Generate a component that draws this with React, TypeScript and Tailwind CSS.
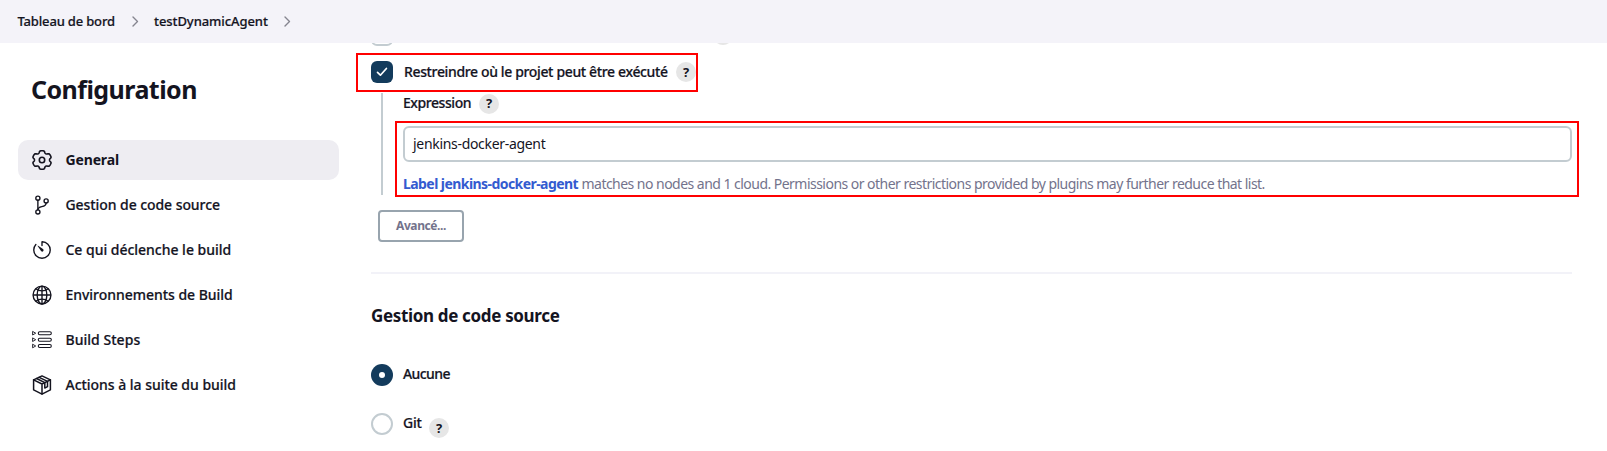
import type { ReactNode } from "react";
import { IoGitBranchOutline, IoTimerOutline, IoGlobeOutline } from "react-icons/io5";

// Outline of a gear with six broad, rounded teeth.
const gearPoints = Array.from({ length: 120 }, (_, i) => {
  const angle = (i * Math.PI) / 60;
  const tooth = Math.tanh(2.2 * (Math.cos(6 * (angle - Math.PI / 2)) + 0.35));
  const radius = 8.2 + 1.05 * tooth;
  return `${(10 + 1.04 * radius * Math.cos(angle)).toFixed(2)},${(10 + radius * Math.sin(angle)).toFixed(2)}`;
}).join(" ");

function GearIcon() {
  return (
    <svg width="20" height="20" viewBox="0 0 20 20" fill="none" stroke="currentColor" strokeWidth="1.6" strokeLinejoin="round">
      <polygon points={gearPoints} />
      <circle cx="10" cy="10" r="2.7" />
    </svg>
  );
}

function StepsIcon() {
  return (
    <svg width="20" height="20" viewBox="0 0 20 20" fill="none" stroke="currentColor" strokeWidth="1.1" strokeLinejoin="round">
      {[3.2, 9.7, 16].map((y) => (
        <g key={y}>
          <path strokeWidth="0.9" d={`M0.6 ${y - 1.8} L3.7 ${y} L0.6 ${y + 1.8} Z`} />
          <rect x="6.3" y={y - 1.5} width="13" height="3" rx="1.4" />
        </g>
      ))}
    </svg>
  );
}

function PackageIcon() {
  return (
    <svg width="20" height="20" viewBox="0 0 20 20" fill="none" stroke="currentColor" strokeWidth="1.5" strokeLinejoin="round" strokeLinecap="round">
      <path d="M10 0.9 L18.4 4.9 V14.8 L10 19.1 L1.6 14.8 V4.9 Z" />
      <path d="M1.6 4.9 L10 9 L18.4 4.9 M10 9 V19.1" />
      <path d="M4.6 3.5 L12.8 7.6 V13.1 L15.5 11.7 V6.4 L7.2 2.3" />
    </svg>
  );
}

function Chevron() {
  return (
    <svg width="7" height="11" viewBox="0 0 7 11" fill="none" stroke="#85858f" strokeWidth="1.4" strokeLinecap="round" strokeLinejoin="round">
      <path d="M1 1 L5.5 5.5 L1 10" />
    </svg>
  );
}

function Help() {
  return (
    <span className="flex size-5 shrink-0 items-center justify-center rounded-full bg-[#e6e6e6] text-[13px] font-bold leading-none">?</span>
  );
}

function NavItem({ icon, label, className }: { icon: ReactNode; label: string; className: string }) {
  return (
    <a className={`flex h-10 items-center gap-[13.5px] rounded-[10px] pl-3.5 text-[14px] leading-5 ${className}`}>
      <span className="flex size-5 shrink-0 items-center justify-center">{icon}</span>
      <span className="whitespace-nowrap">{label}</span>
    </a>
  );
}

export default function App() {
  return (
    <div className="relative h-[451px] w-full overflow-hidden bg-white font-['Noto_Sans',sans-serif] text-[#14141f]">
      <header className="flex h-[43px] items-center bg-[#f4f3f9] pl-[17.5px] text-[13px] font-medium [-webkit-text-stroke:0.2px]">
        <span className="w-[114.5px] whitespace-nowrap tracking-[-0.17px]">Tableau de bord</span>
        <Chevron />
        <span className="ml-[15px] w-[130px] whitespace-nowrap tracking-[-0.08px]">testDynamicAgent</span>
        <Chevron />
      </header>

      <div className="flex h-[408px]">
        <aside className="w-[339px] shrink-0 pl-[18px] pt-[29px]">
          <h1 className="mb-[34px] h-[34px] pl-[13px] text-[25px] font-bold leading-[34px] tracking-[-0.55px]">Configuration</h1>
          <nav className="flex flex-col gap-[5px] font-medium [-webkit-text-stroke:0.2px]">
            <NavItem icon={<GearIcon />} label="General" className="bg-[#eeedf2] font-bold tracking-[-0.15px] [-webkit-text-stroke:0px]" />
            <NavItem icon={<IoGitBranchOutline size={22} className="shrink-0" />} label="Gestion de code source" className="tracking-[-0.07px]" />
            <NavItem icon={<IoTimerOutline size={22} className="shrink-0" />} label="Ce qui déclenche le build" className="tracking-[-0.02px]" />
            <NavItem icon={<IoGlobeOutline size={22} className="shrink-0" />} label="Environnements de Build" className="tracking-[-0.03px]" />
            <NavItem icon={<StepsIcon />} label="Build Steps" className="tracking-[0.03px]" />
            <NavItem icon={<PackageIcon />} label="Actions à la suite du build" className="tracking-[-0.03px]" />
          </nav>
        </aside>

        <main className="ml-8 mr-[35px] flex-1">
          <div className="flex h-[18px] items-start overflow-hidden">
            <span className="-mt-[19px] size-[22px] shrink-0 rounded-md border-2 border-[#c3ccd1]" />
            <span className="-mt-[18px] ml-[320px] size-5 shrink-0 rounded-full bg-[#e6e6e6]" />
          </div>
          <div className="flex h-[22px] items-center">
            <span className="flex size-[22px] shrink-0 items-center justify-center rounded-md bg-[#133b5c]">
              <svg width="12" height="10" viewBox="0 0 12 10" fill="none" stroke="#fff" strokeWidth="1.7" strokeLinecap="round" strokeLinejoin="round">
                <path d="M1.5 5.4 L4.4 8.2 L10.4 1.5" />
              </svg>
            </span>
            <span className="ml-[11px] mr-[8px] w-[264px] whitespace-nowrap text-[14px] font-medium leading-5 tracking-[-0.36px] [-webkit-text-stroke:0.2px]">Restreindre où le projet peut être exécuté</span>
            <Help />
          </div>

          <div className="ml-[10px] mt-[10px] h-[102px] border-l-2 border-[#c3ccd1] pl-5">
            <div className="flex h-[21px] items-center gap-2">
              <span className="w-[68px] whitespace-nowrap pb-[2px] text-[14px] font-medium leading-5 tracking-[-0.43px] [-webkit-text-stroke:0.2px]">Expression</span>
              <Help />
            </div>
            <div className="mt-[12px] flex h-9 items-center rounded-md border-2 border-[#c3ccd1] pl-2">
              <span className="whitespace-nowrap text-[14px] leading-5 tracking-[-0.31px]">jenkins-docker-agent</span>
            </div>
            <p className="mt-[12px] whitespace-nowrap text-[14px] leading-5 text-[#73738c]">
              <a className="inline-block w-[178.5px] font-bold tracking-[-0.565px] text-[#335bd0]">Label jenkins-docker-agent</a>
              <span className="tracking-[-0.53px]">matches no nodes and 1 cloud. Permissions or other restrictions provided by plugins may further reduce that list.</span>
            </p>
          </div>

          <button className="ml-[7px] mt-[15px] flex h-8 w-[86px] items-center justify-center rounded-[4px] border-2 border-[#98a4ae] text-[12px] font-bold tracking-[-0.4px] text-[#73738c]">Avancé...</button>

          <hr className="mt-[30px] border-0 border-t-2 border-[#f2f2f8]" />

          <h2 className="mt-[30px] text-[17px] font-bold leading-6 tracking-[-0.34px]">Gestion de code source</h2>

          <div className="mt-[36px] flex h-[22px] items-center">
            <span className="flex size-[22px] items-center justify-center rounded-full bg-[#133b5c]">
              <span className="size-1.5 rounded-full bg-white" />
            </span>
            <span className="ml-[10px] pb-[2px] text-[14px] font-medium leading-[20px] tracking-[-0.57px] [-webkit-text-stroke:0.2px]">Aucune</span>
          </div>
          <div className="mt-[27px] flex h-[25px] items-start">
            <span className="size-[22px] rounded-full border-2 border-[#c3ccd1]" />
            <span className="ml-[10px] w-[26px] text-[14px] font-medium leading-[20px] tracking-[-0.28px] [-webkit-text-stroke:0.2px]">Git</span>
            <span className="mt-[5px]"><Help /></span>
          </div>
        </main>
      </div>

      <div className="pointer-events-none absolute left-[356px] top-[53px] h-[39px] w-[342px] border-2 border-[#ff0000]" />
      <div className="pointer-events-none absolute left-[395px] top-[121px] h-[76px] w-[1184px] border-2 border-[#ff0000]" />
    </div>
  );
}
